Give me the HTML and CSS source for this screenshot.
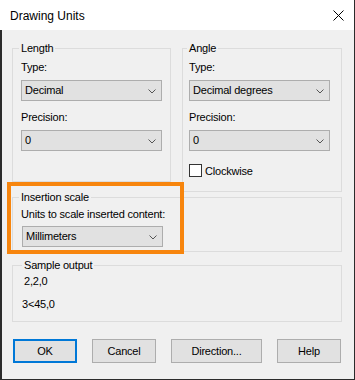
FILE: index.html
```html
<!DOCTYPE html>
<html lang="en">
  <head>
    <title>Drawing Units</title>
    <link rel="stylesheet" href="styles.css">
  </head>

  <body>
    <div class="window">
      <div class="titlebar">
        <span class="title">Drawing Units</span>
        <svg class="close" width="11" height="11" viewBox="0 0 11 11">
          <path d="M0.5 0.5 L10.5 10.5 M10.5 0.5 L0.5 10.5" stroke="#000" stroke-width="1" fill="none"/>
        </svg>
      </div>

      <div class="content">
        <div class="row">
          <fieldset class="group group-length">
            <legend>Length</legend>
            <div class="label first">Type:</div>
            <div class="combo">
              <span>Decimal</span>
              <svg width="8" height="5" viewBox="0 0 8 5"><path d="M0.5 0.5 L4 4 L7.5 0.5" stroke="#555" fill="none"/></svg>
            </div>
            <div class="label second">Precision:</div>
            <div class="combo">
              <span>0</span>
              <svg width="8" height="5" viewBox="0 0 8 5"><path d="M0.5 0.5 L4 4 L7.5 0.5" stroke="#555" fill="none"/></svg>
            </div>
          </fieldset>

          <fieldset class="group group-angle">
            <legend>Angle</legend>
            <div class="label first">Type:</div>
            <div class="combo">
              <span>Decimal degrees</span>
              <svg width="8" height="5" viewBox="0 0 8 5"><path d="M0.5 0.5 L4 4 L7.5 0.5" stroke="#555" fill="none"/></svg>
            </div>
            <div class="label second">Precision:</div>
            <div class="combo">
              <span>0</span>
              <svg width="8" height="5" viewBox="0 0 8 5"><path d="M0.5 0.5 L4 4 L7.5 0.5" stroke="#555" fill="none"/></svg>
            </div>
            <div class="check">
              <span class="box"></span>
              <span>Clockwise</span>
            </div>
          </fieldset>
        </div>

        <fieldset class="group group-insert">
          <legend>Insertion scale</legend>
          <div class="label units">Units to scale inserted content:</div>
          <div class="combo">
            <span>Millimeters</span>
            <svg width="8" height="5" viewBox="0 0 8 5"><path d="M0.5 0.5 L4 4 L7.5 0.5" stroke="#555" fill="none"/></svg>
          </div>
        </fieldset>

        <fieldset class="group group-sample">
          <legend>Sample output</legend>
          <div class="sample-line one">2,2,0</div>
          <div class="sample-line two">3&lt;45,0</div>
        </fieldset>

        <div class="buttons">
          <button class="btn default">OK</button>
          <button class="btn">Cancel</button>
          <button class="btn wide">Direction...</button>
          <button class="btn">Help</button>
        </div>
      </div>

      <!-- orange callout drawn over the dialog -->
      <div class="highlight"></div>
    </div>
  </body>
</html>
```

FILE: styles.css
```css
html, body {
  margin: 0;
  padding: 0;
  background: #f0f0f0;
}

.window {
  position: relative;
  width: 355px;
  height: 380px;
  box-sizing: border-box;
  border-right: 1px solid #2b2b2b;
  border-bottom: 1px solid #2b2b2b;
  background: #f0f0f0;
  font-family: "Liberation Sans", Arial, sans-serif;
  font-size: 11px;
  letter-spacing: -0.2px;
  color: #000;
}

/* title bar */
.titlebar {
  height: 30px;
  box-sizing: border-box;
  padding: 1px 10px 0 10px;
  background: #fff;
  display: flex;
  align-items: center;
  justify-content: space-between;
}

.title {
  font-size: 12px;
  letter-spacing: 0;
}

.close {
  display: block;
  margin-top: -1px;
}

.content {
  height: 350px;
  box-sizing: border-box;
  border-left: 2px solid #2b2b2b;
  padding: 12px 12px 0 10px;
}

.row {
  display: flex;
  align-items: flex-start;
  gap: 11px;
}

/* group boxes */
.group {
  margin: 0;
  min-width: 0;
  box-sizing: border-box;
  border: 1px solid #dcdcdc;
  padding: 0 8px;
}

.group legend {
  padding: 0 2px;
  margin-left: -2px;
  line-height: 13px;
  height: 13px;
}

.group-length {
  width: 159px;
  padding-bottom: 30px;
}

.group-angle {
  width: 160px;
  padding-left: 6px;
  padding-bottom: 14px;
}

.group-insert {
  margin-top: -1px;
  padding-bottom: 4px;
}

.group-insert .combo {
  margin-left: 1px;
  margin-top: 5px;
}

.group-sample {
  margin-top: 7px;
  padding-left: 11px;
  padding-bottom: 10px;
}

.label {
  line-height: 13px;
  height: 13px;
}

.label.first {
  margin-top: 6px;
}

.label.second {
  margin-top: 10px;
}

.label.units {
  margin-top: 4px;
}

/* combo boxes */
.combo {
  width: 141px;
  height: 21px;
  box-sizing: border-box;
  margin-top: 6px;
  border: 1px solid #adadad;
  background: #e1e1e1;
  display: flex;
  align-items: center;
  justify-content: space-between;
  padding: 0 5px 0 3px;
}

.combo span {
  line-height: 13px;
}

.combo svg {
  display: block;
  margin-top: 1px;
}

/* checkbox */
.check {
  margin-top: 13px;
  height: 13px;
  display: flex;
  align-items: center;
  gap: 3px;
}

.check .box {
  width: 13px;
  height: 13px;
  box-sizing: border-box;
  border: 1px solid #333;
  background: #fff;
}

.sample-line {
  line-height: 13px;
  height: 13px;
}

.sample-line.one {
  margin-top: 3px;
}

.sample-line.two {
  margin-top: 10px;
  margin-left: -2px;
}

/* buttons */
.buttons {
  margin-top: 17px;
  padding: 0 1px;
  display: flex;
  justify-content: space-between;
}

.btn {
  width: 64px;
  height: 24px;
  margin: 0;
  padding: 0;
  box-sizing: border-box;
  border: 1px solid #adadad;
  background: #e1e1e1;
  font-family: "Liberation Sans", Arial, sans-serif;
  font-size: 11px;
  letter-spacing: -0.2px;
  color: #000;
}

.btn.wide {
  width: 91px;
}

.btn.default {
  border: 2px solid #0078d7;
}

.highlight {
  position: absolute;
  left: 7px;
  top: 182px;
  width: 177px;
  height: 72px;
  box-sizing: border-box;
  border: 4px solid #f7850d;
}
```
